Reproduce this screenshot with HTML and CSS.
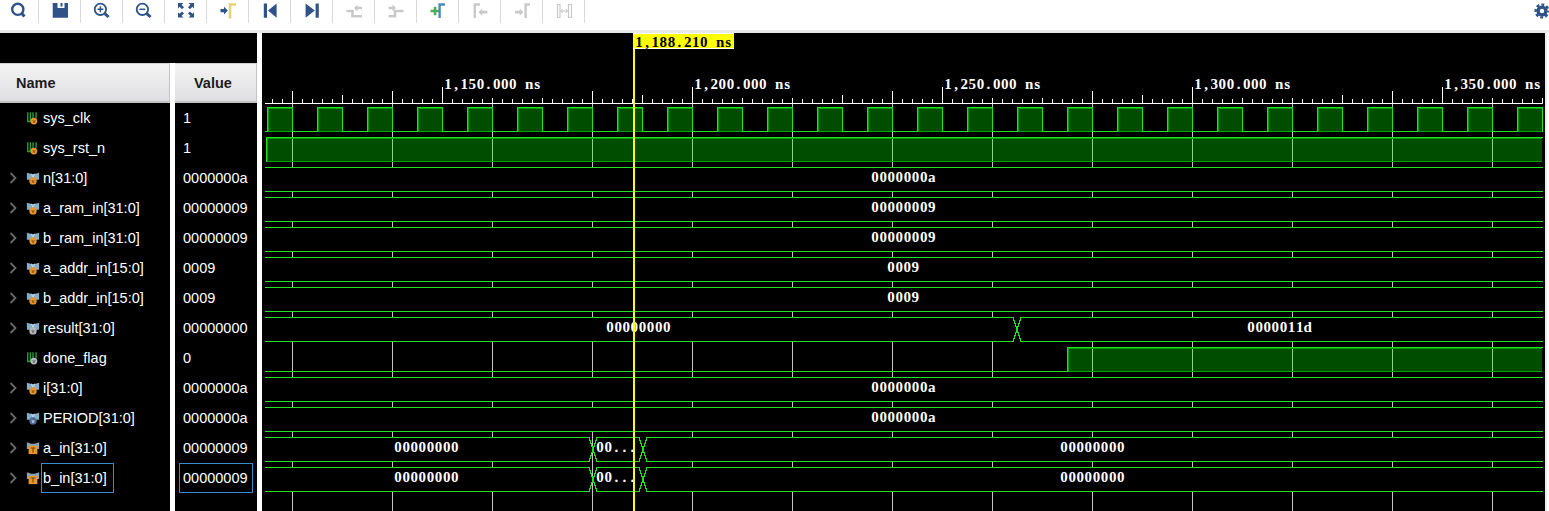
FILE: index.html
```html
<!DOCTYPE html>
<html lang="en">
<head>
    <meta charset="UTF-8">
    <title>Waveform</title>
    <link rel="stylesheet" href="styles.css">
</head>
<body>
    <svg class="defs" width="0" height="0">
        <symbol id="chev" viewBox="0 0 8 12"><path d="M1.5 1 L6.5 6 L1.5 11" fill="none" stroke="#6a6a6a" stroke-width="1.8"/></symbol>
        <symbol id="sig-bit" viewBox="0 0 16 16">
            <path d="M2 1.5 V12 H5 V1.5 M8 1.5 V8 M11.5 1.5 V8" fill="none" stroke="#2f9a3c" stroke-width="1.6"/>
            <circle cx="9" cy="11.5" r="3.9" class="dot"/>
            <text x="9" y="13.4" class="dot-txt">v</text>
        </symbol>
        <symbol id="sig-bus" viewBox="0 0 16 16">
            <path d="M1 2 L6 3.5 H10 L15 2 V10 H11 L8 8 L5 10 H1 Z" fill="#86adc8"/>
            <path d="M6 3 L8 7 L10 3" fill="none" stroke="#cfe0ea" stroke-width="1"/>
            <circle cx="8" cy="11.3" r="4.2" class="dot"/>
            <text x="8" y="13.4" class="dot-txt">v</text>
        </symbol>
        <symbol id="sig-in" viewBox="0 0 16 16">
            <path d="M1 1.5 L6 3 H10 L15 1.5 V9 H1 Z" fill="#86a3b8"/>
            <rect x="3" y="5.5" width="10" height="9.5" fill="#e8952c"/>
            <path d="M5.5 8 H10.5 M8 8 V13" stroke="#7a4300" stroke-width="1.3"/>
        </symbol>
    </svg>

    <div class="toolbar">
        <div class="tool"><svg viewBox="0 0 24 22"><circle cx="11.8" cy="9.3" r="5.6" class="ln" stroke-width="2.4"/><path d="M15.8 13.6 L18.5 16.6" class="ln" stroke-width="3"/></svg></div>
        <div class="tool"><svg viewBox="0 0 24 22"><path d="M4.7 3 H20 V17.8 H4.7 Z M9.5 3 V8 H16.5 V3 H14.5 V6.5 H12.5 V3 Z" class="fl" fill-rule="evenodd"/></svg></div>
        <div class="tool"><svg viewBox="0 0 24 22"><circle cx="10.4" cy="9.3" r="5.7" class="ln" stroke-width="1.8"/><path d="M7.4 9.3 H13.4 M10.4 6.3 V12.3" class="ln" stroke-width="1.5"/><path d="M14.8 13.6 L18.6 17" class="ln" stroke-width="3"/></svg></div>
        <div class="tool"><svg viewBox="0 0 24 22"><circle cx="10.4" cy="9.3" r="5.7" class="ln" stroke-width="1.8"/><path d="M7.4 9.3 H13.4" class="ln" stroke-width="1.5"/><path d="M14.8 13.6 L18.6 17" class="ln" stroke-width="3"/></svg></div>
        <div class="tool"><svg viewBox="0 0 24 22"><g class="fl"><path d="M4 3 H9.4 L7.6 4.8 L10 7.2 L8 9.2 L5.6 6.8 L4 8.4 Z"/><path d="M20 3 H14.6 L16.4 4.8 L14 7.2 L16 9.2 L18.4 6.8 L20 8.4 Z"/><path d="M4 17.6 H9.4 L7.6 15.8 L10 13.4 L8 11.4 L5.6 13.8 L4 12.2 Z"/><path d="M20 17.6 H14.6 L16.4 15.8 L14 13.4 L16 11.4 L18.4 13.8 L20 12.2 Z"/></g></svg></div>
        <div class="tool"><svg viewBox="0 0 24 22"><path d="M4.5 9 H8 V6.8 L11.8 10.6 L8 14.4 V12.2 H4.5 Z" class="fl"/><path d="M14 18.5 V4.5 H20" fill="none" stroke="#e6cf7b" stroke-width="2.6"/></svg></div>
        <div class="tool"><svg viewBox="0 0 24 22"><path d="M5.8 3.5 H9 V17.8 H5.8 Z M18.6 3.5 V17.8 L10 10.6 Z" class="fl"/></svg></div>
        <div class="tool"><svg viewBox="0 0 24 22"><path d="M15.6 3.5 H18.8 V17.8 H15.6 Z M5.6 3.5 V17.8 L14.8 10.6 Z" class="fl"/></svg></div>
        <div class="tool"><svg viewBox="0 0 24 22"><path d="M4.5 11 H10.5 V16.2 H20" class="off-ln" stroke-width="2.6"/><path d="M12 8 L15.5 4.6 V6.8 H20 V9.2 H15.5 V11.4 Z" class="off"/></svg></div>
        <div class="tool"><svg viewBox="0 0 24 22"><path d="M4.5 16.2 H11 V11 H19.5" class="off-ln" stroke-width="2.6"/><path d="M12 8 L8.5 4.6 V6.8 H4.5 V9.2 H8.5 V11.4 Z" class="off"/></svg></div>
        <div class="tool"><svg viewBox="0 0 24 22"><path d="M4.5 11 H13.5 M9 6.8 V15.2" fill="none" stroke="#4fae57" stroke-width="2.6"/><path d="M13.6 18 V4.5 H19" fill="none" stroke="#4a8cbc" stroke-width="2.4"/></svg></div>
        <div class="tool"><svg viewBox="0 0 24 22"><path d="M6.8 18 V4.5 H12" class="off-ln" stroke-width="2.4"/><path d="M10.5 12.2 L14.2 8.6 V10.8 H19.4 V13.6 H14.2 V15.8 Z" class="off"/></svg></div>
        <div class="tool"><svg viewBox="0 0 24 22"><path d="M15.6 18 V4.5 H20" class="off-ln" stroke-width="2.4"/><path d="M13.4 12.2 L9.7 8.6 V10.8 H5 V13.6 H9.7 V15.8 Z" class="off"/></svg></div>
        <div class="tool"><svg viewBox="0 0 24 22"><path d="M5.5 4.5 H8 V17.5 H5.5 Z M16.5 4.5 H19.5 V17.5 H16.5 Z" class="off-ln" stroke-width="1.2"/><path d="M9 11 H15.5 M10.8 9 L9 11 L10.8 13 M13.7 9 L15.5 11 L13.7 13" class="off-ln" stroke-width="1.1"/></svg></div>
        <svg class="gear" viewBox="0 0 16 16"><circle cx="8" cy="8" r="3.9" fill="none" stroke="#2f5288" stroke-width="3.4"/><circle cx="8" cy="8" r="6.4" fill="none" stroke="#2f5288" stroke-width="2.4" stroke-dasharray="2.9 2.13" stroke-dashoffset="1.4"/></svg>
    </div>

    <div class="main">
        <div class="col names">
            <div class="spacer"></div>
            <div class="head">Name</div>
            <div class="row"><svg class="chev"></svg><svg class="sig drv"><use href="#sig-bit"/></svg><span class="lbl">sys_clk</span></div>
            <div class="row"><svg class="chev"></svg><svg class="sig drv"><use href="#sig-bit"/></svg><span class="lbl">sys_rst_n</span></div>
            <div class="row"><svg class="chev"><use href="#chev"/></svg><svg class="sig drv"><use href="#sig-bus"/></svg><span class="lbl">n[31:0]</span></div>
            <div class="row"><svg class="chev"><use href="#chev"/></svg><svg class="sig drv"><use href="#sig-bus"/></svg><span class="lbl">a_ram_in[31:0]</span></div>
            <div class="row"><svg class="chev"><use href="#chev"/></svg><svg class="sig drv"><use href="#sig-bus"/></svg><span class="lbl">b_ram_in[31:0]</span></div>
            <div class="row"><svg class="chev"><use href="#chev"/></svg><svg class="sig drv"><use href="#sig-bus"/></svg><span class="lbl">a_addr_in[15:0]</span></div>
            <div class="row"><svg class="chev"><use href="#chev"/></svg><svg class="sig drv"><use href="#sig-bus"/></svg><span class="lbl">b_addr_in[15:0]</span></div>
            <div class="row"><svg class="chev"><use href="#chev"/></svg><svg class="sig grey"><use href="#sig-bus"/></svg><span class="lbl">result[31:0]</span></div>
            <div class="row"><svg class="chev"></svg><svg class="sig grey"><use href="#sig-bit"/></svg><span class="lbl">done_flag</span></div>
            <div class="row"><svg class="chev"><use href="#chev"/></svg><svg class="sig drv"><use href="#sig-bus"/></svg><span class="lbl">i[31:0]</span></div>
            <div class="row"><svg class="chev"><use href="#chev"/></svg><svg class="sig const"><use href="#sig-bus"/></svg><span class="lbl">PERIOD[31:0]</span></div>
            <div class="row"><svg class="chev"><use href="#chev"/></svg><svg class="sig"><use href="#sig-in"/></svg><span class="lbl">a_in[31:0]</span></div>
            <div class="row"><svg class="chev"><use href="#chev"/></svg><svg class="sig"><use href="#sig-in"/></svg><span class="lbl selected">b_in[31:0]</span></div>
        </div>

        <div class="col values">
            <div class="spacer"></div>
            <div class="head head-value">Value</div>
            <div class="row"><span class="val">1</span></div>
            <div class="row"><span class="val">1</span></div>
            <div class="row"><span class="val">0000000a</span></div>
            <div class="row"><span class="val">00000009</span></div>
            <div class="row"><span class="val">00000009</span></div>
            <div class="row"><span class="val">0009</span></div>
            <div class="row"><span class="val">0009</span></div>
            <div class="row"><span class="val">00000000</span></div>
            <div class="row"><span class="val">0</span></div>
            <div class="row"><span class="val">0000000a</span></div>
            <div class="row"><span class="val">0000000a</span></div>
            <div class="row"><span class="val">00000009</span></div>
            <div class="row"><span class="val selected">00000009</span></div>
        </div>

        <svg id="wave" class="wave" viewBox="262 33 1283 478"></svg>
    </div>

    <script src="wave.js"></script>
</body>
</html>
```

FILE: styles.css
```css
body {
    margin: 0;
    height: 100vh;
    display: flex;
    flex-direction: column;
    overflow: hidden;
    background: #fff;
    font-family: "Liberation Sans", Arial, sans-serif;
    font-size: 14.5px;
}
.defs {
    display: none;
}

/* toolbar */
.toolbar {
    height: 30px;
    flex: none;
    display: flex;
    align-items: flex-start;
    margin-left: -3px;
    border-bottom: 3px solid #e8e8e8;
}
.tool {
    width: 41px;
    height: 23px;
    flex: none;
    border-right: 1px solid #d8d8d8;
    display: flex;
    justify-content: center;
}
.tool svg {
    width: 24px;
    height: 22px;
}
.ln {
    fill: none;
    stroke: #2f5288;
}
.fl {
    fill: #2f5288;
}
.off {
    fill: #c9c9c9;
}
.off-ln {
    fill: none;
    stroke: #c9c9c9;
}
.gear {
    width: 16px;
    height: 16px;
    flex: none;
    margin: 3px -1px 0 auto;
}

/* name + value columns */
.main {
    flex: 1;
    min-height: 0;
    display: flex;
    padding-right: 4px;
    background: linear-gradient(90deg, #fff 1545px, #eee 1545px, #eee 1547px, #fff 1547px);
}
.col {
    flex: none;
    color: #fff;
}
.names {
    width: 170px;
    margin-right: 5px;
    background: #000;
}
.values {
    width: 82px;
    margin-right: 5px;
    background: #000;
}
.spacer {
    height: 30px;
    background: #000;
    box-shadow: 5px 0 0 #000;
}
.values .spacer {
    box-shadow: -5px 0 0 #000;
}
.head {
    height: 40px;
    box-sizing: border-box;
    padding-left: 16px;
    line-height: 38px;
    font-weight: bold;
    color: #1c1c1c;
    background: linear-gradient(#f3f3f3, #dfdfe3);
    border-top: 1px solid #d0d0d0;
    border-right: 1px solid #c4c4c4;
    border-bottom: 2px solid #c4c4c4;
}
.head-value {
    padding-left: 19px;
}
.row {
    height: 30px;
    display: flex;
    align-items: stretch;
}
.chev {
    width: 8px;
    height: 12px;
    flex: none;
    margin: 9px 10px 0 9px;
}
.sig {
    width: 14px;
    height: 14px;
    flex: none;
    margin: 8px 1px 0 -1px;
    --dot: #e8952c;
    --dot-txt: #7a4300;
}
.sig.grey {
    --dot: #b4b8bc;
    --dot-txt: #555;
}
.sig.const {
    --dot: #4d6c9c;
    --dot-txt: #dfe7f2;
}
.dot {
    fill: var(--dot);
}
.dot-txt {
    fill: var(--dot-txt);
    font-family: "Liberation Sans", sans-serif;
    font-size: 6px;
    font-weight: bold;
    text-anchor: middle;
}
.lbl {
    box-sizing: border-box;
    padding: 0 6px 0 1px;
    border: 1px solid transparent;
    line-height: 28px;
}
.val {
    box-sizing: border-box;
    width: 74px;
    margin-left: 4px;
    padding-left: 3px;
    border: 1px solid transparent;
    line-height: 28px;
}
.selected {
    border-color: #3a8cc8;
}

/* waveform canvas */
.wave {
    flex: none;
    width: 1283px;
    height: 478px;
    background: #000;
    display: block;
}
.wave text {
    font-family: "Liberation Serif", "Times New Roman", serif;
    font-size: 15px;
    font-weight: bold;
    fill: #fff;
}
.wave .cursor-time {
    fill: #000;
}
```

FILE: wave.js
```js
// waveform canvas, coordinates are the page pixels (see viewBox)
const svg = document.getElementById('wave');
const LEFT = 265, RIGHT = 1543, BOTTOM = 511;
const GREEN = '#22e022', DIM = '#00a000';
const CELL = 8.1;
// glyph widths at 15px, so every char sits centred in a fixed cell
const GLYPH = {',': 3.8, '.': 3.8, ' ': 3.8, n: 8.3, s: 5.8, d: 8.3};
let out = '';

function line(x1, y1, x2, y2, color) {
    out += `<path d="M${x1} ${y1}L${x2} ${y2}" stroke="${color}" fill="none" shape-rendering="crispEdges"/>`;
}
function label(x, y, txt, cls) {
    const xs = [...txt].map((c, i) => (x + i * CELL + (CELL - (GLYPH[c] || 7.5)) / 2).toFixed(1));
    out += `<text x="${xs.join(' ')}" y="${y}" xml:space="preserve"${cls ? ` class="${cls}"` : ''}>${txt}</text>`;
}

// grid behind the signals
for (let x = 292; x < RIGHT; x += 100) line(x + .5, 103, x + .5, BOTTOM, '#c4c4c4');

// ruler
const tall = {292: 91, 342: 95, 392: 91, 442: 87, 592: 91, 642: 95, 692: 87, 842: 95, 892: 91, 942: 87, 1092: 91, 1142: 95, 1192: 87, 1342: 95, 1392: 91, 1442: 87};
for (let x = 272; x < RIGHT; x += 10) {
    let top = x % 50 === 42 ? 98 : 99;
    if (tall[x]) top = tall[x];
    line(x + .5, top, x + .5, 103, '#fff');
}
line(LEFT, 103.5, RIGHT, 103.5, '#fff');
[[444, '1,150.000 ns'], [694, '1,200.000 ns'], [944, '1,250.000 ns'], [1194, '1,300.000 ns'], [1444, '1,350.000 ns']].forEach(t => label(t[0], 89, t[1]));

function high(x1, x2, top, bot) {
    out += `<rect x="${x1}" y="${top}" width="${x2 - x1}" height="${bot - top}" fill="#00ff00" fill-opacity=".3"/>`;
    line(x1 + 1.5, top + 1.5, x2, top + 1.5, DIM);
    line(x1 + 1.5, top + 1, x1 + 1.5, bot, DIM);
    line(x1 + 1, bot + .5, x2, bot + .5, DIM);
    line(x1 + .5, top, x1 + .5, bot + 1, GREEN);
    line(x1, top + .5, x2 + 1, top + .5, GREEN);
}

// sys_clk
for (let x = 267, low = LEFT; x < RIGHT; x += 50) {
    line(low, 131.5, x + 1, 131.5, GREEN);
    high(x, x + 25, 107, 131);
    line(x + 25.5, 107, x + 25.5, 132, GREEN);
    low = x + 25;
    if (x + 50 >= RIGHT) line(low, 131.5, RIGHT, 131.5, GREEN);
}

// sys_rst_n
high(266, RIGHT - 1, 137, 161);

// done_flag
line(LEFT, 371.5, 1068, 371.5, GREEN);
high(1067, RIGHT - 1, 347, 371);

// buses: black shape that hides the grid, with a crossing at every change
function bus(top, segments) {
    const bot = top + 24;
    const cross = 8;
    segments.forEach((s, i) => {
        const a = i ? s.from + cross : LEFT;
        const b = s.to;
        out += `<rect x="${a}" y="${top}" width="${b - a}" height="24" fill="#000"/>`;
        line(a, top + .5, b, top + .5, GREEN);
        line(a, bot + .5, b, bot + .5, GREEN);
        label(s.tx, top + 15, s.text);
        if (i < segments.length - 1) {
            out += `<path d="M${b} ${top + .5}L${b + cross} ${bot + .5}M${b} ${bot + .5}L${b + cross} ${top + .5}" stroke="${GREEN}" fill="none" shape-rendering="crispEdges"/>`;
        }
    });
}
const flat = (top, text, tx) => bus(top, [{to: RIGHT, text, tx}]);
flat(167, '0000000a', 871);
flat(197, '00000009', 871);
flat(227, '00000009', 871);
flat(257, '0009', 887);
flat(287, '0009', 887);
bus(317, [{to: 1013, text: '00000000', tx: 606}, {from: 1013, to: RIGHT, text: '0000011d', tx: 1247}]);
flat(377, '0000000a', 871);
flat(407, '0000000a', 871);
[437, 467].forEach(top => bus(top, [
    {to: 589, text: '00000000', tx: 394},
    {from: 589, to: 639, text: '00...', tx: 596},
    {from: 639, to: RIGHT, text: '00000000', tx: 1060}
]));

// cursor and its time flag
out += '<rect x="633" y="49" width="2" height="462" fill="#ffff00"/>';
out += '<rect x="633" y="33" width="101" height="16" fill="#ffff00"/>';
line(633, 33.5, 734, 33.5, '#fff');
line(633, 48.5, 734, 48.5, '#fff');
label(635, 46.5, '1,188.210 ns', 'cursor-time');

svg.innerHTML = out;
```
